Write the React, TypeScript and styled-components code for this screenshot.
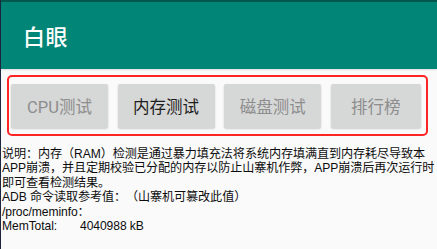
import React from "react";
import styled, { createGlobalStyle } from "styled-components";

const Global = createGlobalStyle`
  html, body {
    margin: 0;
    padding: 0;
    background: #fafafa;
    overflow: hidden;
  }
  body {
    font-family: "Liberation Sans", "Noto Sans CJK SC", sans-serif;
  }
`;

const Screen = styled.div`
  width: 437px;
  height: 249px;
  box-sizing: border-box;
  border-left: 1px solid #1c2640;
  background: #fafafa;
  display: flex;
  flex-direction: column;
  overflow: hidden;
`;

const AppBar = styled.header`
  height: 69px;
  box-sizing: border-box;
  border-top: 2px solid #00574b;
  background: #008577;
  display: flex;
  align-items: center;
  padding-left: 22px;
  padding-bottom: 1px;
  box-shadow: 0 1px 2px rgba(0, 0, 0, 0.12);
`;

const Title = styled.h1`
  margin: 0;
  color: #ffffff;
  font-family: "Noto Sans CJK SC", sans-serif;
  font-size: 22px;
  font-weight: 500;
  letter-spacing: 0.5px;
`;

const Content = styled.main`
  display: flex;
  flex-direction: column;
  padding: 6px 9px 0 6px;
`;

const ButtonBar = styled.div`
  border: 2px solid #ff2424;
  border-radius: 5px;
  padding: 7px 4px 6px 2px;
  display: grid;
  grid-template-columns: 97px 97px 97px 90px;
  column-gap: 9.6px;
`;

const TestButton = styled.button<{ $enabled?: boolean }>`
  height: 44px;
  border: none;
  border-radius: 2px;
  background: #d6d7d7;
  box-shadow: 0 1px 2px rgba(0, 0, 0, 0.18);
  color: ${(p) => (p.$enabled ? "#1e1e1e" : "#8d8d8d")};
  font-family: "Roboto", "Noto Sans CJK SC", sans-serif;
  font-size: 16.5px;
  padding: 0;
  cursor: default;
`;

const Description = styled.div`
  margin-top: 11px;
  margin-left: -5px;
  margin-right: -9px;
  font-family: "Liberation Sans", "Noto Sans CJK SC", sans-serif;
  font-size: 12.1px;
  letter-spacing: -0.08px;
  line-height: 14.4px;
  color: #0d0d0d;
  text-spacing-trim: space-all;
`;

const Line = styled.p`
  margin: 0;
  white-space: pre-wrap;
`;

const buttons = [
  { label: "CPU测试", enabled: false },
  { label: "内存测试", enabled: true },
  { label: "磁盘测试", enabled: false },
  { label: "排行榜", enabled: false },
];

export default function App() {
  return (
    <>
      <Global />
      <Screen>
        <AppBar>
          <Title>白眼</Title>
        </AppBar>
        <Content>
          <ButtonBar>
            {buttons.map((b) => (
              <TestButton key={b.label} $enabled={b.enabled}>
                {b.label}
              </TestButton>
            ))}
          </ButtonBar>
          <Description>
            <Line>
              说明：内存（RAM）检测是通过暴力填充法将系统内存填满直到内存耗尽导致本APP崩溃，并且定期校验已分配的内存以防止山寨机作弊，APP崩溃后再次运行时即可查看检测结果。
            </Line>
            <Line>ADB 命令读取参考值：（山寨机可篡改此值）</Line>
            <Line>/proc/meminfo：</Line>
            <Line>{"MemTotal:       4040988 kB"}</Line>
          </Description>
        </Content>
      </Screen>
    </>
  );
}
